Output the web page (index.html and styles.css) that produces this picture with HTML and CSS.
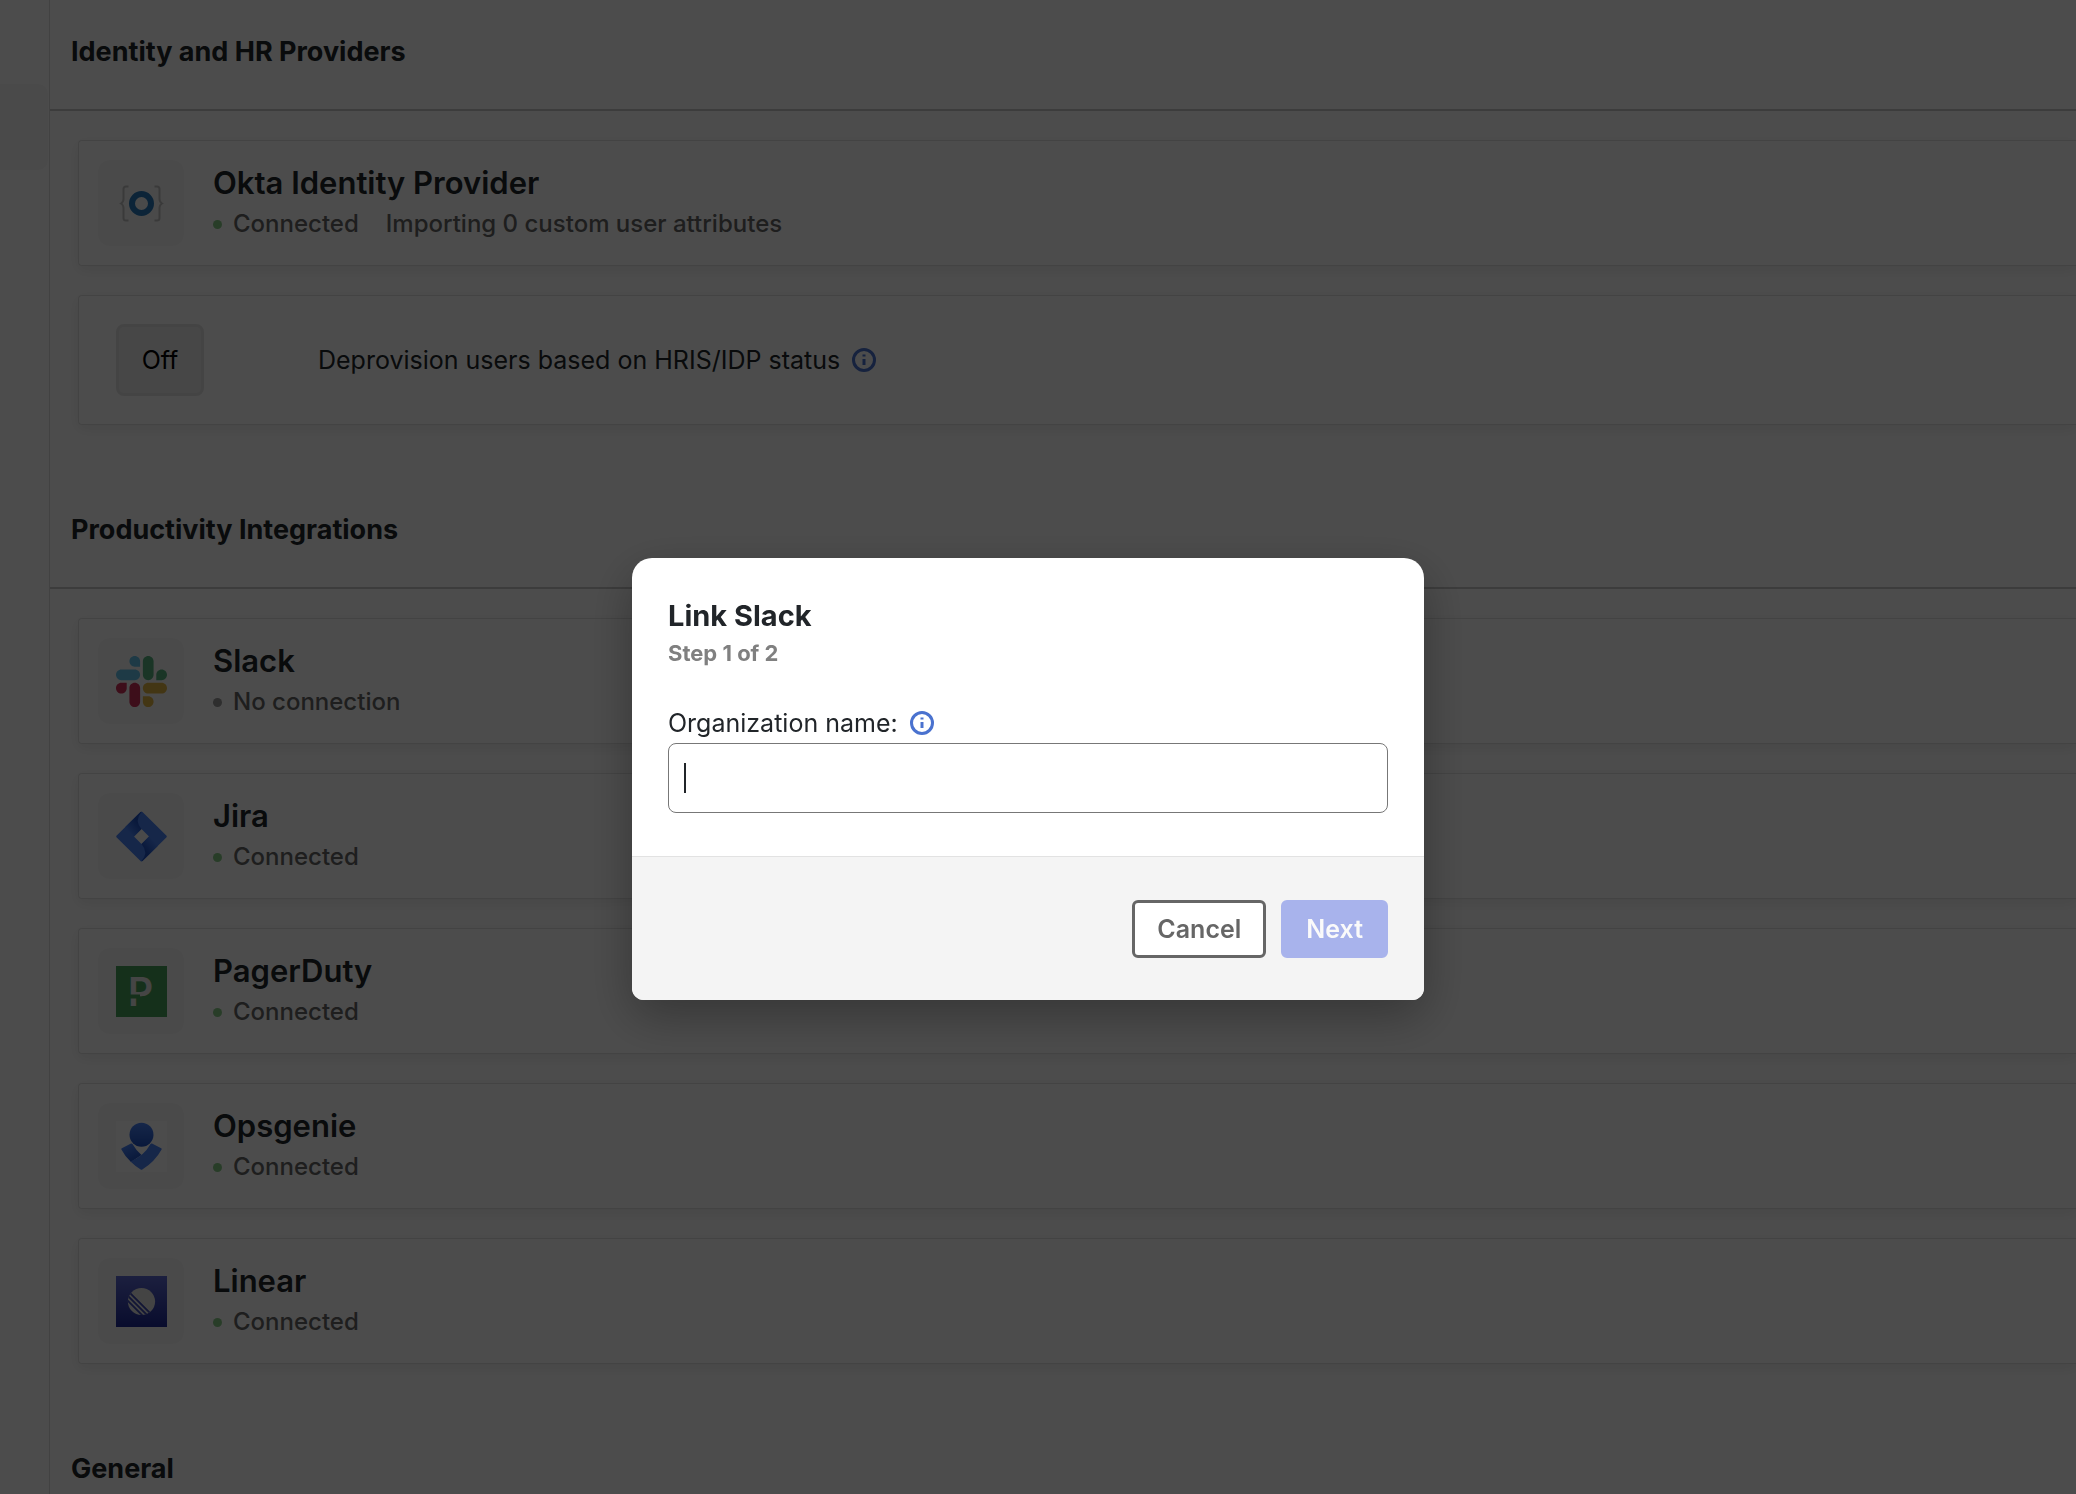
FILE: index.html
```html
<!DOCTYPE html>
<html lang="en">
<head>
<meta charset="UTF-8" />
<meta name="viewport" content="width=device-width, initial-scale=1" />
<title>Integrations</title>
<link rel="stylesheet" href="styles.css">
</head>
<body>
<div class="page">
  <nav class="sidebar">
    <div class="sidebar-item"></div>
  </nav>

  <main class="content">
    <section class="section">
      <h2>Identity and HR Providers</h2>
      <div class="cards">
        <article class="card">
          <div class="logo">
            <svg width="51" height="51" viewBox="0 0 51 51">
              <g fill="none" stroke="#c4c4c4" stroke-width="2">
                <path d="M12.500 8.500h-2.500q-2.500 0-2.500 2.500v10q0 3-2.500 4.500q2.500 1.500 2.500 4.500v10q0 2.500 2.500 2.500h2.500" />
                <path d="M38.500 8.500h2.500q2.500 0 2.500 2.500v10q0 3 2.500 4.500q-2.500 1.500-2.500 4.500v10q0 2.500-2.500 2.500h-2.500" />
              </g>
              <circle cx="25.500" cy="25.500" r="9.500" fill="none" stroke="#2a7bbb" stroke-width="6" />
            </svg>
          </div>
          <div class="info">
            <h3>Okta Identity Provider</h3>
            <p class="status"><span class="dot on"></span>Connected <span class="detail">Importing 0 custom user attributes</span></p>
          </div>
        </article>
        <article class="card card-setting">
          <button type="button" class="toggle" id="deprovision">Off</button>
          <label for="deprovision">Deprovision users based on HRIS/IDP status</label>
          <svg class="icon-info" viewBox="0 0 24 24">
            <circle cx="12" cy="12" r="10.500" />
            <path d="M12 11v6M12 6.500v2" />
          </svg>
        </article>
      </div>
    </section>

    <section class="section">
      <h2>Productivity Integrations</h2>
      <div class="cards">
        <article class="card">
          <div class="logo">
            <svg width="51" height="51" viewBox="0 0 122.800 122.800">
              <path fill="#cd2f57" d="M25.800 77.600c0 7.100-5.800 12.900-12.900 12.900S0 84.700 0 77.600s5.800-12.900 12.900-12.900h12.900v12.900zm6.500 0c0-7.100 5.800-12.900 12.900-12.900s12.900 5.800 12.900 12.900v32.300c0 7.100-5.800 12.900-12.900 12.900s-12.900-5.800-12.900-12.900V77.600z" />
              <path fill="#65c3eb" d="M45.200 25.800c-7.100 0-12.900-5.800-12.900-12.900S38.100 0 45.200 0s12.900 5.800 12.900 12.900v12.900H45.200zm0 6.500c7.100 0 12.900 5.800 12.900 12.900s-5.800 12.900-12.900 12.900H12.900C5.800 58.100 0 52.300 0 45.200s5.800-12.900 12.900-12.900h32.300z" />
              <path fill="#57b380" d="M97 45.200c0-7.100 5.800-12.900 12.900-12.900s12.900 5.800 12.900 12.900-5.800 12.900-12.900 12.900H97V45.200zm-6.500 0c0 7.100-5.800 12.900-12.900 12.900s-12.900-5.800-12.900-12.900V12.900C64.700 5.800 70.500 0 77.600 0s12.900 5.800 12.900 12.900v32.300z" />
              <path fill="#e2b445" d="M77.600 97c7.100 0 12.900 5.800 12.900 12.900s-5.800 12.900-12.900 12.900-12.900-5.800-12.900-12.900V97h12.900zm0-6.500c-7.100 0-12.900-5.800-12.900-12.900s5.800-12.900 12.900-12.900h32.300c7.100 0 12.900 5.800 12.900 12.900s-5.800 12.900-12.900 12.900H77.600z" />
            </svg>
          </div>
          <div class="info">
            <h3>Slack</h3>
            <p class="status"><span class="dot"></span>No connection</p>
          </div>
        </article>
        <article class="card">
          <div class="logo">
            <svg width="51" height="51" viewBox="0 0 51 51">
              <defs>
                <linearGradient id="jira-a" gradientUnits="userSpaceOnUse" x1="24" y1="10" x2="12" y2="20">
                  <stop offset="0.150" stop-color="#1e51c4" />
                  <stop offset="1" stop-color="#4a83f6" />
                </linearGradient>
              </defs>
              <path fill="#4a83f6" fill-rule="evenodd" d="M24.500 1q1-1 2 0L50.300 24.500q1 1 0 2L26.500 50q-1 1-2 0L.7 26.500q-1-1 0-2zM25.500 18L18 25.500l7.500 7.500 7.500-7.500z" />
              <path id="jira-fold" fill="url(#jira-a)" d="M24.500 1l1 0Q18 9.500 25.500 18L18 25.500 9 16.300z" />
              <use href="#jira-fold" transform="rotate(180 25.500 25.500)" />
            </svg>
          </div>
          <div class="info">
            <h3>Jira</h3>
            <p class="status"><span class="dot on"></span>Connected</p>
          </div>
        </article>
        <article class="card">
          <div class="logo">
            <svg width="51" height="51" viewBox="0 0 51 51">
              <rect width="51" height="51" fill="#48a05a" />
              <text class="pd-mark" x="12" y="39.500">P</text>
              <rect x="12" y="28.500" width="12" height="4" fill="#48a05a" />
            </svg>
          </div>
          <div class="info">
            <h3>PagerDuty</h3>
            <p class="status"><span class="dot on"></span>Connected</p>
          </div>
        </article>
        <article class="card">
          <div class="logo">
            <svg width="51" height="51" viewBox="0 0 51 51">
              <defs>
                <linearGradient id="ops-head" x1="0" y1="0" x2="0" y2="1">
                  <stop offset="0" stop-color="#4a83f6" />
                  <stop offset="1" stop-color="#1e51c4" />
                </linearGradient>
                <linearGradient id="ops-arm" x1="0" y1="0" x2="0.600" y2="1">
                  <stop offset="0.200" stop-color="#4a83f6" />
                  <stop offset="1" stop-color="#1e51c4" />
                </linearGradient>
              </defs>
              <rect width="51" height="51" fill="#fff" />
              <circle cx="25.500" cy="13.700" r="12" fill="url(#ops-head)" />
              <path fill="url(#ops-arm)" d="M5.800 27.200L15 22.600q1-.4 1.500.5Q20 29.500 25.500 34L15 41Q9 35.500 5.400 28.500q-.4-.9.400-1.300z" />
              <path fill="#4a83f6" d="M45.200 27.200L36 22.600q-1-.4-1.500.5Q28 35 14.500 40.500q4.500 4.500 10.200 8.100.8.500 1.600 0Q39 40.500 45.600 28.500q.4-.9-.4-1.300z" />
            </svg>
          </div>
          <div class="info">
            <h3>Opsgenie</h3>
            <p class="status"><span class="dot on"></span>Connected</p>
          </div>
        </article>
        <article class="card">
          <div class="logo">
            <svg width="51" height="51" viewBox="0 0 51 51">
              <defs>
                <linearGradient id="linear-bg" x1="0" y1="0" x2="0" y2="1">
                  <stop offset="0" stop-color="#5e6ad2" />
                  <stop offset="1" stop-color="#1e2a96" />
                </linearGradient>
                <clipPath id="linear-clip"><circle cx="25.500" cy="25.500" r="13.600" /></clipPath>
              </defs>
              <rect width="51" height="51" fill="url(#linear-bg)" />
              <g clip-path="url(#linear-clip)">
                <rect x="11" y="11" width="29" height="29" fill="#e4e4e4" />
                <path stroke="#3c48b2" stroke-width="1.800" d="M8 11l32 32M8 16l32 32M8 21l32 32" />
              </g>
            </svg>
          </div>
          <div class="info">
            <h3>Linear</h3>
            <p class="status"><span class="dot on"></span>Connected</p>
          </div>
        </article>
      </div>
    </section>

    <section class="section">
      <h2>General</h2>
    </section>
  </main>
</div>

<div class="overlay">
  <form class="modal" role="dialog" aria-labelledby="modalTitle">
    <div class="modal-body">
      <h1 id="modalTitle">Link Slack</h1>
      <p class="step">Step 1 of 2</p>
      <div class="field-label">
        <label for="orgName">Organization name:</label>
        <svg class="icon-info" viewBox="0 0 24 24">
          <circle cx="12" cy="12" r="10.500" />
          <path d="M12 11v6M12 6.500v2" />
        </svg>
      </div>
      <div class="field">
        <input type="text" id="orgName" autocomplete="off" />
      </div>
    </div>
    <div class="modal-footer">
      <button type="button" class="btn btn-cancel">Cancel</button>
      <button type="submit" class="btn btn-next" disabled>Next</button>
    </div>
  </form>
</div>
</body>
</html>
```

FILE: styles.css
```css
* { box-sizing: border-box; }
body {
  margin: 0;
  font-family: Inter, "Liberation Sans", sans-serif; font-size: 25px; line-height: 32px;
  color: #212529; background: #fff;
}
h1, h2, h3, p { margin: 0; }
button, input { font: inherit; }

/* page does not scroll while the modal is open */
.page { display: flex; height: 100vh; overflow: hidden; }
.sidebar { width: 50px; flex: none; padding-top: 84px; border-right: 1px solid #dedede; }
.sidebar-item { width: 48px; height: 86px; background: #f8f8f8; border-radius: 0 10px 10px 0; }

.content { flex: 1; min-width: 0; }
.section { padding-bottom: 53px; }
.section h2 {
  padding: 38px 21px 43px; border-bottom: 2px solid #c8c8c8;
  font-size: 27px; line-height: 28px; font-weight: 700;
}
.cards { display: flex; flex-direction: column; gap: 29px; padding: 29px 0 0 28px; }
.card {
  display: flex; align-items: center; gap: 29px; padding: 19px;
  border: 1px solid #e2e2e2; border-right: 0; border-radius: 4px 0 0 4px;
  background: #fff; box-shadow: 0 4px 14px rgba(0, 0, 0, 0.08);
}
.logo {
  display: flex; align-items: center; justify-content: center;
  width: 86px; height: 86px; border-radius: 12px; background: #f9f9f9;
}
.pd-mark { font-size: 39px; font-weight: 600; fill: #e8e8e8; }
.info h3 { font-size: 31px; line-height: 42px; font-weight: 600; }
.status {
  display: flex; align-items: center; font-size: 24px; line-height: 40px; font-weight: 500; color: #666;
}
.dot { width: 9px; height: 9px; margin-right: 11px; border-radius: 50%; background: #999; }
.dot.on { background: #8c8; }
.detail { margin-left: 27px; }

.card-setting { gap: 12px; padding: 28px 37px; }
.toggle {
  width: 88px; height: 72px; margin-right: 102px; padding: 0;
  border: 3px solid #e4e4e4; border-radius: 8px; background: #efefef; color: #000;
}
.icon-info { width: 24px; height: 24px; fill: none; stroke: #4a72cf; stroke-width: 3; }

.overlay {
  position: fixed; inset: 0; display: flex; align-items: center; justify-content: center;
  padding: 64px 20px 0 0; background: rgba(0, 0, 0, 0.7);
}
.modal {
  width: 792px; max-width: 100%; overflow: hidden; border-radius: 20px 20px 12px 12px;
  background: #fff; box-shadow: 0 16px 48px rgba(0, 0, 0, 0.3);
}
.modal-body { padding: 40px 36px 43px; }
.modal h1 { font-size: 29px; line-height: 36px; font-weight: 700; }
.step { font-size: 22px; line-height: 38px; font-weight: 700; color: #808080; }
.field-label { display: flex; align-items: center; gap: 12px; margin-top: 35px; }
.field { position: relative; margin-top: 4px; }
.field input {
  display: block; width: 100%; height: 70px; padding: 0 16px;
  border: 1px solid #777; border-radius: 8px; outline: 0; caret-color: transparent;
}
/* text cursor */
.field::after {
  content: ""; position: absolute; top: 20px; left: 16px; width: 2px; height: 30px; background: #212529;
}
.modal-footer {
  display: flex; justify-content: flex-end; gap: 15px; padding: 43px 36px 42px;
  border-top: 1px solid #e2e2e2; background: #f4f4f4;
}
.btn { height: 58px; padding: 0 22px; border: 3px solid #666; border-radius: 6px; font-weight: 600; }
.btn-cancel { background: #fff; color: #666; }
.btn-next { border-color: #a8b3ec; background: #a8b3ec; color: #fafafa; }
```
